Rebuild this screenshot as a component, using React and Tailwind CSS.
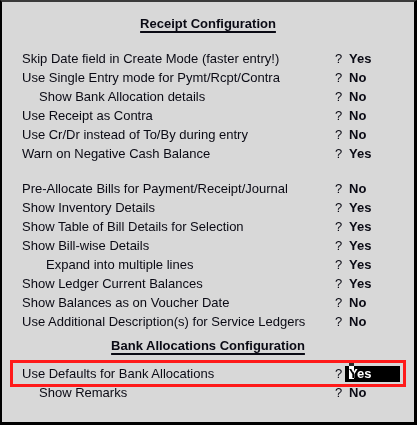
import React from 'react';

const firstGroup = [
  { label: 'Skip Date field in Create Mode (faster entry!)', value: 'Yes' },
  { label: 'Use Single Entry mode for Pymt/Rcpt/Contra', value: 'No' },
  { label: 'Show Bank Allocation details', value: 'No', indent: 'pl-[17px]' },
  { label: 'Use Receipt as Contra', value: 'No' },
  { label: 'Use Cr/Dr instead of To/By during entry', value: 'No' },
  { label: 'Warn on Negative Cash Balance', value: 'Yes' },
];

const secondGroup = [
  { label: 'Pre-Allocate Bills for Payment/Receipt/Journal', value: 'No' },
  { label: 'Show Inventory Details', value: 'Yes' },
  { label: 'Show Table of Bill Details for Selection', value: 'Yes' },
  { label: 'Show Bill-wise Details', value: 'Yes' },
  { label: 'Expand into multiple lines', value: 'Yes', indent: 'pl-[24px]' },
  { label: 'Show Ledger Current Balances', value: 'Yes' },
  { label: 'Show Balances as on Voucher Date', value: 'No' },
  { label: 'Use Additional Description(s) for Service Ledgers', value: 'No' },
];

function Row({ label, value, indent = '', labelWidth = 'w-[313px]' }) {
  return (
    <div className="flex h-[19px] items-center pl-[12px]">
      <div className={`${labelWidth} ${indent} whitespace-nowrap`}>{label}</div>
      <div className="w-[10px]">?</div>
      <div className="pl-[4px] font-bold">{value}</div>
    </div>
  );
}

function Title({ children }) {
  return (
    <div className="flex h-[19px] items-center justify-center">
      <span className="font-bold underline decoration-[1.5px] underline-offset-[3px]">{children}</span>
    </div>
  );
}

export default function App() {
  return (
    <div
      className="w-[417px] h-[425px] bg-[#d8d8d8] border-l-2 border-t-2 border-r-[3px] border-b-[3px] border-l-black border-t-[#3a3a3a] border-r-black border-b-black text-[13px] text-[#0a0a14]"
      style={{ fontFamily: '"Liberation Sans", Arial, sans-serif' }}
    >
      <div className="px-[8px] pt-[12px]">
        <Title>Receipt Configuration</Title>

        <div className="mt-[16px]">
          {firstGroup.map((r) => (
            <Row key={r.label} {...r} />
          ))}
        </div>

        <div className="mt-[16px]">
          {secondGroup.map((r) => (
            <Row key={r.label} {...r} />
          ))}
        </div>

        <div className="mt-[5px]">
          <Title>Bank Allocations Configuration</Title>
        </div>

        {/* Selected row */}
        <div className="mt-[5px] border-[3px] border-[#ff1a1a] h-[27px] flex items-center pl-[9px]">
          <div className="w-[313px] whitespace-nowrap">Use Defaults for Bank Allocations</div>
          <div className="w-[10px]">?</div>
          <div className="w-[55px] h-[16px] bg-black text-white font-bold pl-[4px] flex items-center">
            <span className="relative">
              Yes
              <span className="absolute left-0 top-[-1px] w-[5px] h-[16px] bg-white mix-blend-difference" />
            </span>
          </div>
        </div>

        <div className="mt-[-4px]">
          <Row label="Show Remarks" value="No" indent="pl-[17px]" />
        </div>
      </div>
    </div>
  );
}
